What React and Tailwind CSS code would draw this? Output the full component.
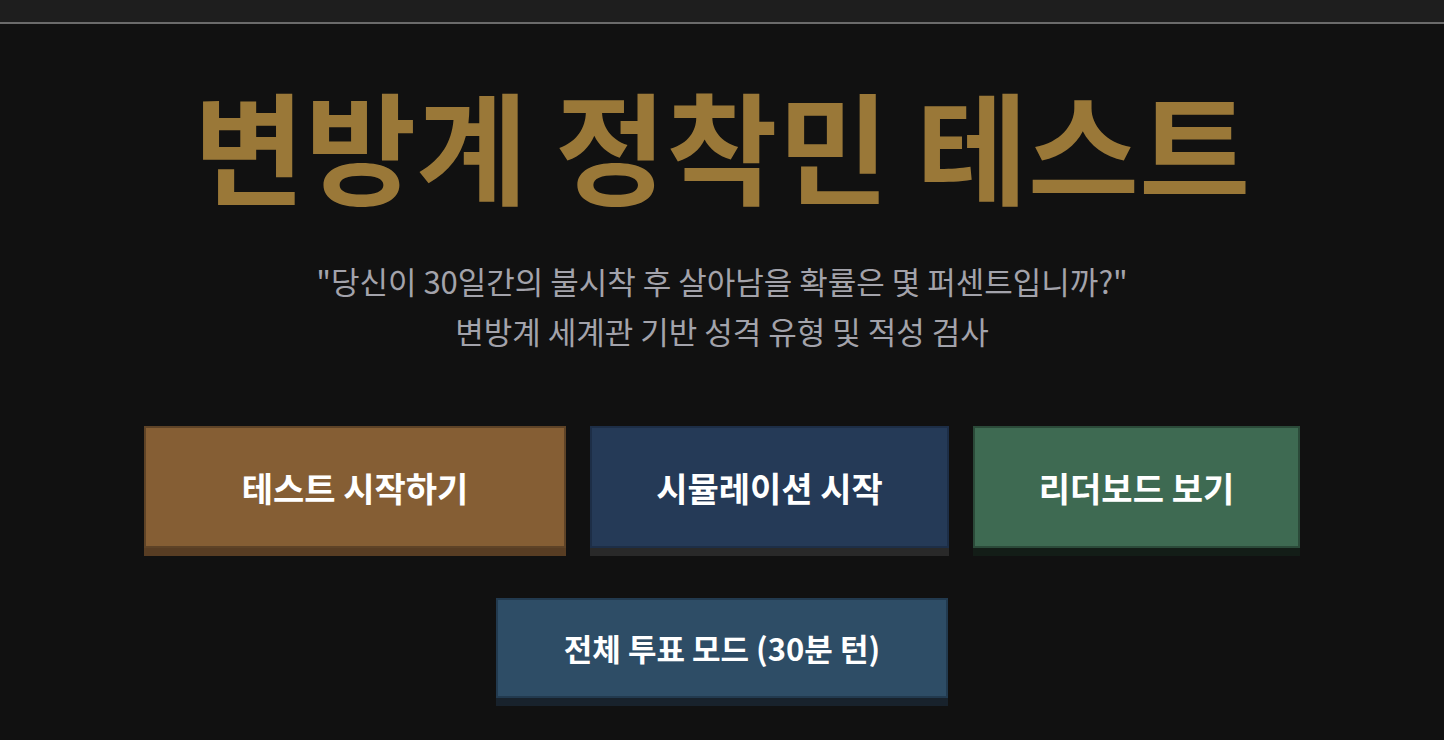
const FONT = { fontFamily: '"Noto Sans CJK KR", "Noto Sans", sans-serif' }

const BUTTONS = [
  { label: '테스트 시작하기', cls: 'w-[422px] bg-[#855e34] border-[#5e4327] shadow-[0_8px_0_#583d23]' },
  { label: '시뮬레이션 시작', cls: 'w-[359px] bg-[#253a57] border-[#1d2e47] shadow-[0_8px_0_#292929]' },
  { label: '리더보드 보기', cls: 'w-[327px] bg-[#3e6a52] border-[#2b4a39] shadow-[0_8px_0_#131d17]' },
]

export default function App() {
  return (
    <div className="min-h-screen bg-[#111111] text-white" style={FONT}>
      <div className="h-[24px] bg-[#1e1e1e] border-b-2 border-[#6b6b6b]" />
      <div className="flex flex-col items-center">
        <h1 className="mt-[46px] text-[121px] leading-[145px] font-semibold text-[#9a7838]">
          변방계 정착민 테스트
        </h1>
        <div className="mt-[41px] text-center text-[31px] leading-[50px] text-[#a3a3ab]">
          <p>"당신이 30일간의 불시착 후 살아남을 확률은 몇 퍼센트입니까?"</p>
          <p>변방계 세계관 기반 성격 유형 및 적성 검사</p>
        </div>
        <div className="mt-[70px] flex gap-[24px]">
          {BUTTONS.map((b) => (
            <button
              key={b.label}
              className={`h-[122px] border-2 text-[34px] font-bold text-white ${b.cls}`}
            >
              {b.label}
            </button>
          ))}
        </div>
        <button className="mt-[50px] w-[452px] h-[100px] border-2 bg-[#2e4d66] border-[#223a4f] shadow-[0_8px_0_#18222c] text-[31px] font-bold text-white">
          전체 투표 모드 (30분 턴)
        </button>
      </div>
    </div>
  )
}
